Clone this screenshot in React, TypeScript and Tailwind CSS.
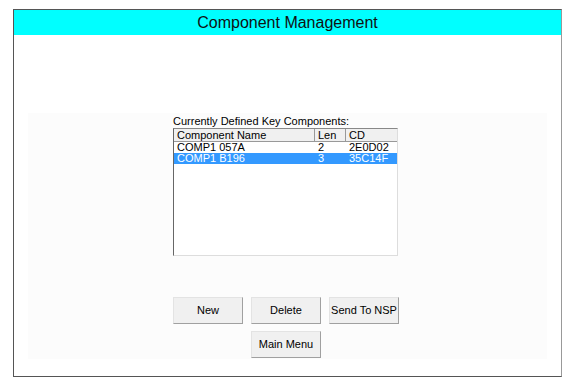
export default function App() {
  const rows = [
    { name: "COMP1 057A", len: "2", cd: "2E0D02" },
    { name: "COMP1 B196", len: "3", cd: "35C14F" },
  ];
  const selected = 1;

  const btn =
    "h-[27px] w-[70px] whitespace-nowrap bg-[#f0f0f0] border border-t-[#e3e3e3] border-l-[#e3e3e3] border-r-[#a0a0a0] border-b-[#a0a0a0] text-[11px] text-black";

  return (
    <div className="w-[574px] h-[387px] bg-white pt-[9px] pl-[13px]" style={{ fontFamily: '"Liberation Sans", Arial, sans-serif' }}>
      <div className="w-[549px] h-[368px] border border-[#555] border-r-[#999] flex flex-col">
        <div className="h-[25px] bg-[#00ffff] flex items-center justify-center text-[16px] text-[#111]">
          Component Management
        </div>
        <div className="flex-1 px-[14px] pt-[78px]">
          <div className="h-[246px] bg-[#fcfcfc] flex flex-col items-start pl-[145px] pt-[2px]">
            <div className="w-[225px]">
              <div className="text-[11px] leading-[12px] mb-[1px] text-black">Currently Defined Key Components:</div>
              <div className="h-[128px] border border-l-[#666] border-t-[#888] border-r-[#ddd] border-b-[#ddd] bg-white text-[11px] leading-[11px]">
                <div className="flex h-[13px] border-b border-[#999] bg-[#f0f0f0]">
                  <div className="w-[141px] border-r border-[#999] px-[3px] pt-[1px]">Component Name</div>
                  <div className="w-[31px] border-r border-[#999] px-[3px] pt-[1px]">Len</div>
                  <div className="flex-1 px-[3px] pt-[1px]">CD</div>
                </div>
                {rows.map((r, i) => (
                  <div
                    key={r.name}
                    className={
                      "flex h-[11px] " + (i === selected ? "bg-[#3399ff] text-white" : "text-black")
                    }
                  >
                    <div className="w-[141px] px-[3px]">{r.name}</div>
                    <div className="w-[31px] px-[3px]">{r.len}</div>
                    <div className="flex-1 px-[3px]">{r.cd}</div>
                  </div>
                ))}
              </div>
            </div>
            <div className="mt-[41px] flex gap-[8px]">
              <button className={btn}>New</button>
              <button className={btn}>Delete</button>
              <button className={btn}>Send To NSP</button>
            </div>
            <div className="mt-[7px] ml-[78px]">
              <button className={btn}>Main Menu</button>
            </div>
          </div>
        </div>
      </div>
    </div>
  );
}
